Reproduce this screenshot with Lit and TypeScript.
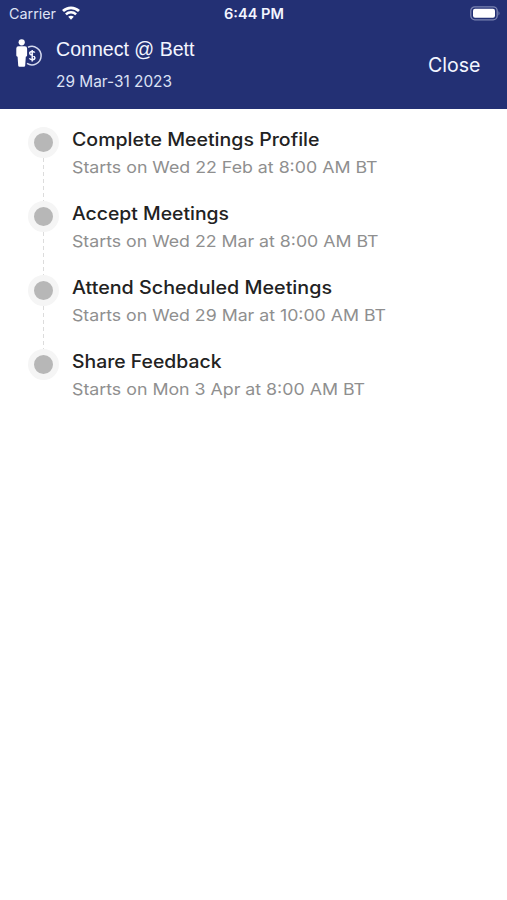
import { LitElement, html, css, svg } from "lit";
import { customElement, property } from "lit/decorators.js";

/** A single line of text set to a fixed measure. */
@customElement("fit-text")
export class FitText extends LitElement {
  @property() text = "";
  @property({ type: Number }) measure = 100;

  static styles = css`
    :host { display: block; line-height: 0; }
    .line { display: block; height: 24px; overflow: visible; fill: currentColor; }
  `;

  render() {
    return html`<svg class="line" width=${this.measure} height="24">
      ${svg`<text x="0" y="18" textLength=${this.measure} lengthAdjust="spacingAndGlyphs">${this.text}</text>`}
    </svg>`;
  }
}

interface Step {
  title: string;
  titleWidth: number;
  when: string;
  whenWidth: number;
}

const STEPS: Step[] = [
  { title: "Complete Meetings Profile", titleWidth: 247.5, when: "Starts on Wed 22 Feb at 8:00 AM BT", whenWidth: 305.5 },
  { title: "Accept Meetings", titleWidth: 157, when: "Starts on Wed 22 Mar at 8:00 AM BT", whenWidth: 306.5 },
  { title: "Attend Scheduled Meetings", titleWidth: 260, when: "Starts on Wed 29 Mar at 10:00 AM BT", whenWidth: 314 },
  { title: "Share Feedback", titleWidth: 149.5, when: "Starts on Mon 3 Apr at 8:00 AM BT", whenWidth: 293 },
];

@customElement("app-root")
export class AppRoot extends LitElement {
  static styles = css`
    :host {
      display: block;
      height: 900px;
      background: #fff;
      font-family: Inter, "Liberation Sans", sans-serif;
      overflow: hidden;
    }
    .header { height: 109px; background: #233074; color: #f3f5ff; }
    .status {
      display: grid;
      grid-template-columns: 215px 1fr 215px;
      height: 28px;
      padding: 0 6px 0 9px;
      box-sizing: border-box;
    }
    .carrier { display: flex; gap: 6px; font-size: 14px; color: #dfe3f5; }
    .carrier fit-text, .clock { margin-top: 1px; }
    .wifi { margin-top: 6px; }
    .clock { font-size: 14px; font-weight: 600; }
    .power { justify-self: end; margin-top: 6px; }
    .bar { display: flex; padding: 9px 27px 0 15px; }
    .logo { flex: none; margin-top: 1px; }
    .names { flex: 1; margin-left: 13px; }
    .name { font: 19.5px "Liberation Sans", sans-serif; margin-top: 1px; }
    .dates { font-size: 15.7px; color: #dce1f5; margin-top: 7px; }
    .close { font-size: 20px; margin-top: 17px; }
    .steps { list-style: none; margin: 0; padding: 18px 0 0 28px; }
    .step { display: flex; height: 74px; }
    .track { display: flex; flex-direction: column; align-items: center; width: 31px; margin-right: 13px; }
    .dot {
      flex: none;
      width: 19px;
      height: 19px;
      border: 6px solid #f5f5f5;
      border-radius: 50%;
      background: #b7b7b7;
    }
    .link {
      flex: 1;
      width: 1px;
      background: repeating-linear-gradient(#dcdcdc 0 4px, #fff 4px 7px);
    }
    .step:last-child .link { visibility: hidden; }
    .title { font-size: 18px; font-weight: 450; color: #222; margin-top: 1px; }
    .when { font-size: 16.4px; color: #8f8f8f; margin-top: 3px; }
  `;

  render() {
    return html`
      <header class="header">
        <div class="status">
          <div class="carrier">
            <fit-text text="Carrier" measure="47"></fit-text>
            <svg class="wifi" width="18" height="14" viewBox="0 0 18 14" fill="none" stroke="#fff">
              <path d="M1 5.1C5.6.7 12.4.7 17 5.1" stroke-width="2.8" />
              <path d="M3.9 8.3C6.8 5.5 11.2 5.5 14.1 8.3" stroke-width="2.5" />
              <path d="M9 13.8 6.2 10.8C7.7 9.3 10.3 9.3 11.8 10.8Z" fill="#fff" stroke="none" />
            </svg>
          </div>
          <fit-text class="clock" text="6:44 PM" measure="60"></fit-text>
          <svg class="power" width="31" height="15" viewBox="0 0 31 15">
            <rect x=".8" y=".8" width="26.4" height="13" rx="4" fill="none" stroke="#7b84b1" stroke-width="1.3" />
            <rect x="3" y="2.8" width="22" height="9" rx="2" fill="#fff" />
            <path d="M28.5 5q2 2.3 0 4.6Z" fill="#7b84b1" />
          </svg>
        </div>
        <div class="bar">
          <svg class="logo" width="28" height="30" viewBox="0 0 28 30">
            <circle cx="6.7" cy="4.3" r="3.1" fill="#fff" />
            <path d="M3.5 8.2h6.4q2.2 0 2.2 2.3v7.1q0 1.1-1.3 1.1l-.6 8.8q-.1 1.3-1.3 1.3H4.5q-1.2 0-1.3-1.3l-.6-8.8q-1.3 0-1.3-1.1v-7.1q0-2.3 2.2-2.3Z" fill="#fff" />
            <path d="M13 9.3A9.2 9.2 0 1 1 12 25.4" fill="none" stroke="#d5daef" stroke-width="1.5" />
            <path d="M19.7 14.6c-.8-1.7-5-1.5-5 .7 0 2.7 5.2 1.5 5.2 4.4 0 2.4-4.6 2.6-5.5.6M17.2 11.9v11.6" fill="none" stroke="#f3f5ff" stroke-width="1.5" />
          </svg>
          <div class="names">
            <fit-text class="name" text="Connect @ Bett" measure="138.5"></fit-text>
            <fit-text class="dates" text="29 Mar-31 2023" measure="116"></fit-text>
          </div>
          <fit-text class="close" text="Close" measure="52.5"></fit-text>
        </div>
      </header>
      <ol class="steps">
        ${STEPS.map(
          (s) => html`<li class="step">
            <div class="track"><span class="dot"></span><span class="link"></span></div>
            <div>
              <fit-text class="title" .text=${s.title} .measure=${s.titleWidth}></fit-text>
              <fit-text class="when" .text=${s.when} .measure=${s.whenWidth}></fit-text>
            </div>
          </li>`
        )}
      </ol>
    `;
  }
}
